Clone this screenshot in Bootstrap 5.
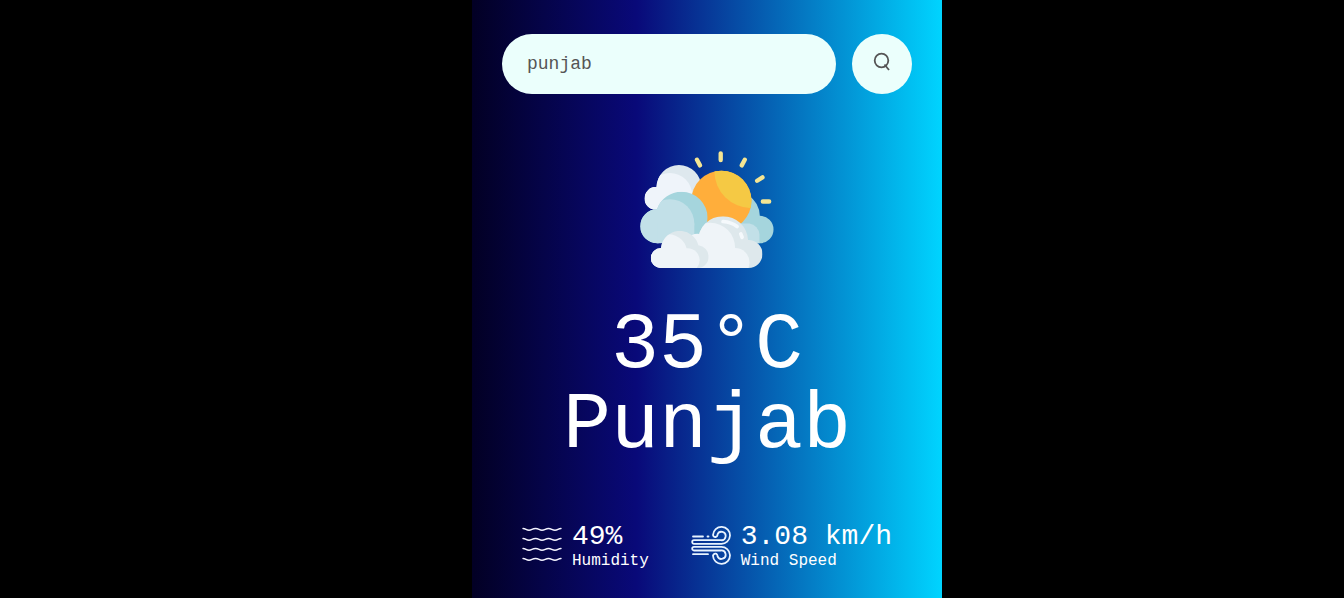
<!DOCTYPE html>
<html lang="en">
<head>
<meta charset="utf-8">
<meta name="viewport" content="width=device-width, initial-scale=1">
<title>Weather</title>
<link href="https://cdn.jsdelivr.net/npm/bootstrap@5.3.0/dist/css/bootstrap.min.css" rel="stylesheet">
<style>
body { background: #000; font-family: "Courier New", "Liberation Mono", monospace; }
main { padding-left: 70px; }
.weather-panel {
  width: 100%; max-width: 470px; padding: 34px 30px 24px;
  background: linear-gradient(90deg, #020024 0%, #090979 35%, #00d4ff 100%);
}
.search-field, .search-field:focus {
  height: 60px; padding: 0 25px; border: 0; font-size: 18px;
  background: #ebfffc; color: #555; box-shadow: none;
}
.search-btn, .search-btn:hover { width: 60px; height: 60px; background: #ebfffc; color: #555; }
.sky-icon { width: 134px; height: 117px; margin-top: 57px; }
.temp, .city { font-size: 80px; line-height: 80px; font-weight: 400; margin: 0; }
.temp { margin-top: 38px; }
.details { margin-top: 57px; padding: 0 20px; }
.detail { gap: 10px; }
.detail svg { width: 40px; height: 40px; margin-top: 2px; }
.value { font-size: 28px; line-height: 28px; }
.caption { font-size: 16px; line-height: 20px; }
</style>
</head>
<body>
<main class="min-vh-100 d-flex justify-content-center">
  <section class="weather-panel text-white text-center">
    <form class="d-flex gap-3" onsubmit="return false">
      <input type="text" class="search-field form-control rounded-pill" aria-label="City name" value="punjab" spellcheck="false">
      <button type="submit" class="search-btn btn rounded-circle border-0 p-0 flex-shrink-0 d-flex align-items-center justify-content-center" aria-label="Search">
        <svg class="mb-1" width="18" height="20" viewBox="0 0 18 20" fill="none" stroke="currentColor" stroke-width="1.800"><circle cx="8.500" cy="8.500" r="6.800"/><path d="M11.500 12.500L16 18"/></svg>
      </button>
    </form>

    <svg class="sky-icon d-block mx-auto" viewBox="33 33 400 350" aria-hidden="true">
      <defs>
        <clipPath id="topCloud"><circle cx="149" cy="142" r="67"/><circle cx="80" cy="175" r="34"/></clipPath>
        <clipPath id="leftCloud"><circle cx="157" cy="233" r="78"/><circle cx="84" cy="258" r="51"/></clipPath>
        <clipPath id="frontCloud"><circle cx="281" cy="303" r="75"/><circle cx="357" cy="341" r="42"/><path d="M150 303H357V383H150Z"/></clipPath>
        <clipPath id="smallCloud"><circle cx="152" cy="329" r="57"/><circle cx="95" cy="353" r="30"/><circle cx="204" cy="349" r="34"/><path d="M95 345H204V383H95Z"/></clipPath>
        <clipPath id="sun"><circle cx="276" cy="182" r="90"/></clipPath>
      </defs>
      <path stroke="#f5e593" stroke-width="13" stroke-linecap="round" d="M274 40V60M203 59L212 76M346 59L337 76M399 112L383 122M400 184H419"/>
      <g clip-path="url(#topCloud)">
        <path fill="#dee8ee" d="M33 60H230V230H33Z"/>
        <g fill="#eff4fa"><circle cx="122" cy="166" r="67"/><circle cx="80" cy="175" r="35"/></g>
      </g>
      <path fill="#a5d5dd" d="M355 164Q390 188 391 227A41 41 0 1 1 391 309H310V220Z"/>
      <path fill="#c2e0e8" d="M310 250H360A36 36 0 0 1 390 283V309H310Z"/>
      <g clip-path="url(#sun)">
        <path fill="#ffae3b" d="M180 85H370V275H180Z"/>
        <circle fill="#f5c944" cx="366" cy="93" r="111"/>
      </g>
      <g clip-path="url(#leftCloud)">
        <path fill="#a5d5dd" d="M33 150H240V309H33Z"/>
        <g fill="#c2e0e8"><circle cx="122" cy="250" r="73"/><circle cx="84" cy="258" r="51"/></g>
      </g>
      <path fill="#c2e0e8" d="M84 250H195V309H84Z"/>
      <g clip-path="url(#frontCloud)">
        <path fill="#dee8ec" d="M140 220H405V390H140Z"/>
        <g fill="#eff4f8"><circle cx="243" cy="322" r="74"/><circle cx="317" cy="366" r="43"/></g>
        <path fill="none" stroke="#f5f9fc" stroke-width="11" stroke-linecap="round" d="M281 244Q306 246 323 259M334 281L338 291"/>
      </g>
      <path fill="#eff4f8" d="M188 284Q202 278 218 283L225 350H185Z"/>
      <g clip-path="url(#smallCloud)">
        <path fill="#dee8ec" d="M60 265H245V390H60Z"/>
        <g fill="#eff4f8"><circle cx="117" cy="339" r="57"/><circle cx="175" cy="360" r="36"/><path d="M65 340H150V390H65Z"/></g>
      </g>
    </svg>

    <h1 class="temp">35°C</h1>
    <h2 class="city">Punjab</h2>

    <div class="details d-flex flex-wrap justify-content-between text-start">
      <div class="detail d-flex align-items-start">
        <svg viewBox="0 0 40 40" fill="none" stroke="#f4f4ff" stroke-width="1.400" stroke-linecap="round" aria-hidden="true">
          <path id="wave" d="M1 3.500C4 3.500 4 5.200 7 5.200S10 3.500 13.500 3.500S17 5.200 20 5.200S23.500 3.500 26.500 3.500S30 5.200 33 5.200S36 3.500 39 3.500"/>
          <use href="#wave" y="10"/><use href="#wave" y="20"/><use href="#wave" y="30"/>
        </svg>
        <div>
          <div class="value">49%</div>
          <div class="caption">Humidity</div>
        </div>
      </div>
      <div class="detail d-flex align-items-start">
        <svg viewBox="0 0 40 40" fill="none" stroke="#e8f3ff" stroke-width="1.800" stroke-linecap="round" stroke-linejoin="round" aria-hidden="true">
          <path d="M2 11.500H12M16.500 11.500H17.500M3 15.200H30A4.200 4.200 0 1 0 26.500 9.500A2 2 0 1 1 22 10A8.500 8.500 0 1 1 30 18.800H3A1.800 1.800 0 0 1 3 15.200"/>
          <path d="M2 29.200H17M3 25.500H30A4.200 4.200 0 1 1 26.500 31.200A2 2 0 1 0 22 30.700A8.500 8.500 0 1 0 30 21.900H3A1.800 1.800 0 0 0 3 25.500"/>
        </svg>
        <div>
          <div class="value">3.08 km/h</div>
          <div class="caption">Wind Speed</div>
        </div>
      </div>
    </div>
  </section>
</main>
<script src="https://cdn.jsdelivr.net/npm/bootstrap@5.3.0/dist/js/bootstrap.bundle.min.js"></script>
</body>
</html>
